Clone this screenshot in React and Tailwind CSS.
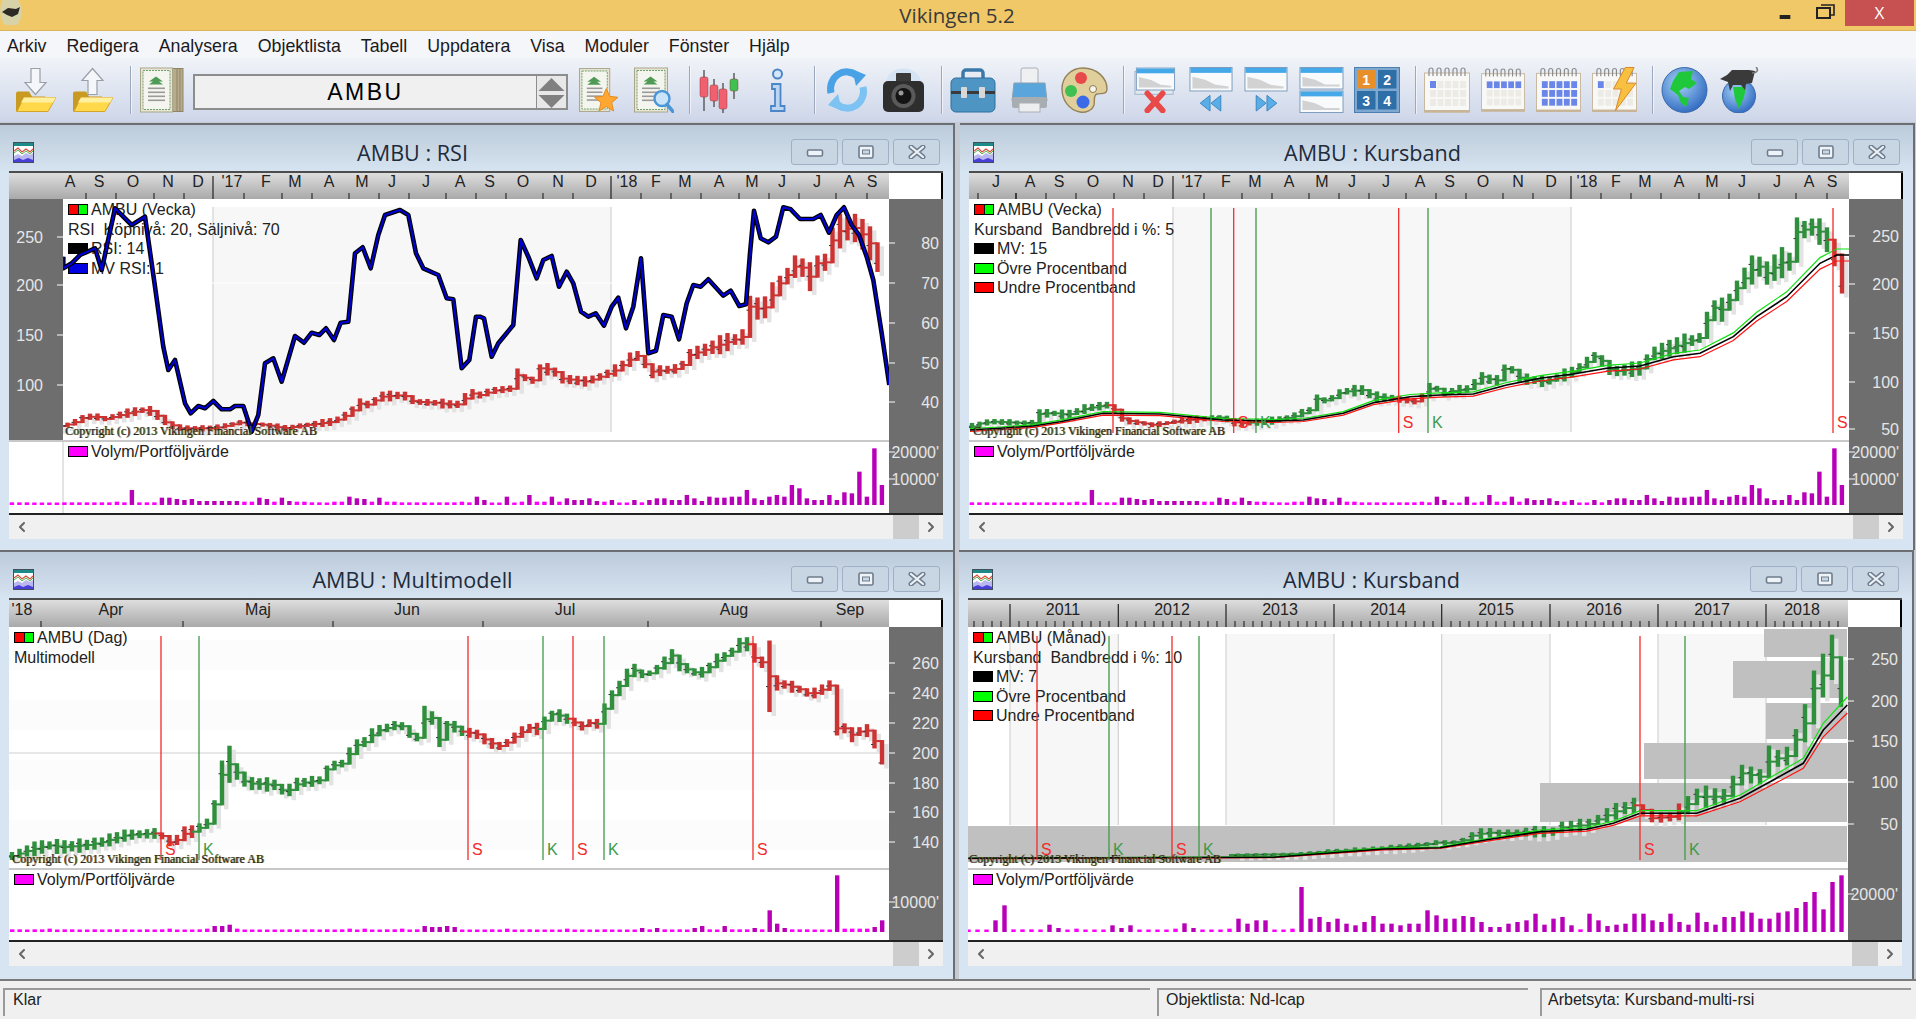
import { ChevronLeft, ChevronRight } from "lucide-react";

const RED = "#cc3333";
const GREEN = "#2f8f3c";

const zp = (ox, oy, arr) => arr.map(([x, y]) => [ox + x / 3, oy + y / 3]);
const rnd = (i) => {
  const v = Math.sin(i * 12.9898) * 43758.5453;
  return v - Math.floor(v);
};
const interp = (path, x) => {
  if (x <= path[0][0]) return path[0][1];
  for (let i = 1; i < path.length; i++) {
    if (x <= path[i][0]) {
      const [x0, y0] = path[i - 1];
      const [x1, y1] = path[i];
      return y0 + ((y1 - y0) * (x - x0)) / (x1 - x0 || 1);
    }
  }
  return path[path.length - 1][1];
};
const pts = (path) => path.map(([x, y]) => `${x.toFixed(1)},${y.toFixed(1)}`).join(" ");
const colorAt = (segs, x) => {
  let c = "g";
  for (const [sx, sc] of segs) if (x >= sx) c = sc;
  return c === "g" ? GREEN : RED;
};

// price paths read off the picture
const weeklyRight = [[0, 825], [40, 812], [100, 805], [110, 765], [170, 785], [180, 745], [220, 750], [240, 775], [320, 785], [400, 755], [470, 705], [515, 755], [600, 745], [630, 705], [790, 650], [810, 560], [850, 570], [875, 530], [900, 490], [945, 440], [965, 440], [990, 470], [1010, 430], [1050, 425], [1060, 340], [1120, 320], [1145, 340], [1170, 370], [1190, 420], [1212, 500]];
const rsiPrice = [...zp(0, 120, [[170, 920], [220, 910], [240, 895], [285, 888], [310, 898], [380, 880], [440, 868], [465, 880], [490, 905], [540, 925], [580, 925], [640, 925], [720, 908], [800, 915], [850, 925], [920, 915], [1000, 905], [1050, 880], [1075, 850], [1100, 855], [1145, 830], [1210, 825], [1240, 845], [1300, 848], [1370, 855], [1415, 820], [1440, 825]]), ...zp(480, 120, weeklyRight)];
const rsiLine = [...zp(0, 120, [[190, 410], [190, 445], [215, 430], [240, 405], [285, 385], [305, 450], [345, 265], [395, 315], [435, 290], [465, 500], [490, 680], [505, 750], [525, 720], [555, 850], [572, 880], [595, 858], [615, 865], [640, 843], [665, 868], [690, 868], [705, 858], [730, 858], [755, 935], [775, 885], [795, 730], [820, 715], [845, 785], [885, 648], [912, 668], [935, 638], [958, 645], [978, 625], [1002, 660], [1022, 608], [1045, 605], [1065, 400], [1088, 382], [1112, 445], [1135, 345], [1155, 285], [1200, 270], [1225, 285], [1248, 400], [1270, 445], [1315, 465], [1340, 535], [1360, 538], [1385, 745], [1408, 720], [1428, 590]]), ...zp(480, 120, [[0, 590], [12, 595], [35, 710], [55, 670], [100, 615], [122, 360], [145, 410], [170, 475], [190, 420], [215, 408], [237, 500], [260, 455], [280, 490], [303, 575], [325, 590], [347, 580], [372, 617], [395, 560], [415, 533], [438, 625], [460, 560], [483, 415], [505, 700], [528, 692], [550, 585], [575, 590], [597, 658], [620, 550], [640, 495], [662, 500], [685, 478], [730, 527], [752, 512], [778, 558], [798, 553], [810, 400], [822, 272], [842, 355], [865, 367], [888, 350], [910, 262], [932, 268], [960, 297], [1000, 297], [1022, 285], [1047, 338], [1070, 285], [1092, 262], [1115, 315], [1137, 345], [1160, 410], [1180, 480], [1205, 640], [1228, 795]])];
const kursPrice = [...zp(960, 120, [[35, 920], [60, 910], [100, 905], [215, 910], [240, 880], [290, 880], [320, 885], [380, 865], [440, 855], [465, 870], [490, 900], [580, 915], [680, 900], [750, 895], [790, 892], [830, 910], [920, 905], [1000, 890], [1050, 870], [1075, 830], [1100, 845], [1145, 815], [1210, 810], [1240, 830], [1300, 835], [1370, 845], [1415, 800], [1440, 810]]), ...zp(1440, 120, weeklyRight)];
const kursMv = [...zp(960, 120, [[30, 930], [120, 925], [220, 918], [300, 905], [430, 880], [600, 882], [790, 900], [940, 903], [1030, 900], [1150, 880], [1240, 848], [1350, 830], [1440, 825]]), ...zp(1440, 120, [[0, 825], [100, 822], [200, 795], [300, 775], [400, 762], [500, 745], [600, 738], [700, 710], [780, 700], [880, 650], [950, 590], [1040, 530], [1140, 430], [1190, 405], [1228, 405]])];
const multiPrice = [...zp(0, 550, [[30, 920], [90, 900], [130, 890], [155, 885], [180, 892], [260, 885], [300, 878], [380, 855], [470, 850], [490, 860], [512, 880], [540, 865], [560, 845], [585, 845], [605, 828], [628, 818], [650, 740], [672, 650], [695, 640], [718, 680], [740, 700], [830, 705], [855, 730], [895, 700], [965, 690], [985, 650], [1030, 640], [1050, 610], [1075, 580], [1100, 575], [1125, 545], [1190, 525], [1212, 530], [1235, 560], [1260, 565], [1280, 480], [1300, 510], [1325, 590], [1348, 495], [1370, 545], [1395, 545], [1415, 550], [1440, 555]]), ...zp(480, 550, [[0, 555], [20, 575], [65, 590], [110, 555], [155, 530], [178, 540], [200, 500], [222, 490], [270, 510], [288, 520], [310, 530], [335, 515], [360, 525], [378, 460], [400, 430], [425, 400], [450, 365], [470, 360], [495, 380], [515, 365], [560, 335], [582, 310], [605, 355], [630, 360], [650, 370], [675, 365], [695, 345], [720, 325], [765, 300], [785, 270], [810, 290], [830, 340], [855, 335], [875, 400], [898, 400], [920, 405], [965, 420], [990, 435], [1035, 415], [1060, 400], [1066, 535], [1100, 535], [1125, 565], [1145, 535], [1168, 545], [1190, 585], [1212, 650]])];
const monthPrice = [...zp(960, 550, [[830, 915], [1020, 912], [1100, 905], [1260, 895], [1350, 888], [1420, 880], [1440, 875]]), ...zp(1440, 550, [[0, 880], [60, 875], [100, 855], [140, 848], [200, 850], [280, 845], [340, 845], [370, 830], [440, 825], [470, 810], [525, 785], [580, 765], [610, 780], [630, 805], [700, 800], [770, 740], [850, 740], [905, 670], [960, 680], [990, 630], [1040, 620], [1095, 520], [1122, 415], [1150, 375], [1177, 320], [1203, 410]])];
const monthMv = [...zp(960, 550, [[25, 925], [940, 922], [1100, 910], [1270, 897], [1440, 893]]), ...zp(1440, 550, [[0, 893], [150, 868], [300, 845], [440, 838], [520, 820], [600, 790], [770, 790], [900, 745], [1000, 690], [1090, 640], [1150, 540], [1222, 465]])];

const weeklyVol = [8, 8, 8, 5, 5, 5, 5, 8, 8, 8, 8, 8, 8, 8, 10, 8, 45, 8, 8, 8, 22, 22, 18, 15, 18, 12, 12, 12, 12, 12, 12, 10, 10, 22, 18, 10, 22, 12, 10, 10, 8, 8, 5, 10, 10, 25, 20, 18, 10, 22, 10, 10, 8, 8, 8, 8, 5, 8, 8, 8, 10, 8, 25, 15, 7, 5, 25, 7, 10, 30, 10, 10, 25, 10, 20, 15, 15, 20, 12, 10, 15, 7, 5, 15, 8, 15, 20, 20, 15, 15, 30, 20, 12, 25, 22, 22, 25, 25, 45, 20, 15, 25, 30, 25, 60, 50, 20, 15, 15, 30, 15, 38, 35, 100, 25, 170, 60];
const dailyVol = [8, 8, 6, 8, 8, 10, 6, 8, 8, 6, 6, 8, 6, 8, 8, 8, 6, 6, 8, 6, 8, 10, 6, 6, 5, 8, 10, 18, 18, 22, 10, 5, 5, 5, 5, 6, 5, 8, 5, 6, 8, 5, 8, 5, 8, 10, 6, 10, 6, 5, 8, 8, 10, 6, 8, 18, 15, 15, 18, 15, 5, 5, 5, 5, 8, 6, 10, 5, 5, 8, 5, 5, 6, 5, 10, 5, 5, 5, 5, 8, 6, 5, 5, 5, 12, 8, 12, 8, 5, 8, 5, 12, 18, 8, 5, 18, 8, 8, 8, 12, 8, 65, 25, 12, 8, 8, 8, 6, 5, 5, 170, 10, 10, 10, 10, 15, 35];
const monthVol = [3, 3, 3, 35, 80, 8, 8, 8, 6, 22, 12, 6, 10, 6, 6, 6, 20, 12, 20, 6, 3, 5, 5, 10, 26, 12, 6, 6, 6, 10, 40, 25, 35, 35, 6, 6, 10, 135, 40, 45, 30, 40, 25, 20, 30, 48, 25, 25, 20, 25, 25, 65, 50, 40, 40, 48, 45, 30, 15, 15, 25, 30, 35, 55, 22, 40, 45, 20, 8, 55, 35, 18, 22, 25, 55, 55, 35, 30, 55, 30, 22, 58, 30, 22, 45, 45, 62, 58, 40, 40, 58, 62, 72, 90, 120, 68, 150, 170];

function PriceBars({ path, from, to, step, segs, hw, seed = 1 }) {
  const bars = [];
  let i = 0;
  let prevY = null;
  for (let x = from; x <= to; x += step) {
    const y = interp(path, x);
    const h = Math.max(1.5, hw(y, x) * (0.55 + 0.7 * rnd(i + seed)));
    const last = prevY === null ? y : prevY;
    bars.push({
      x,
      last,
      top: Math.min(y - h, last - 1),
      bottom: Math.max(y + h, last + 1),
      c: colorAt(segs, x),
      t: y + (rnd(i + 40) - 0.5) * h,
    });
    prevY = y;
    i++;
  }
  return (
    <g>
      {bars.map((b) => (
        <rect key={`s${b.x}`} x={b.x + 2} y={b.top + 4} width="4.5" height={b.bottom - b.top} fill="#e3e3e3" />
      ))}
      {bars.map((b) => (
        <g key={b.x}>
          <rect x={b.x - step} y={b.last - 1} width={step} height="2" fill={b.c} />
          <rect x={b.x - 2.2} y={b.top} width="4.4" height={b.bottom - b.top} fill={b.c} />
          <rect x={b.x - 3.5} y={b.t} width="2" height="1" fill="#333" />
        </g>
      ))}
    </g>
  );
}

function VolBars({ data, from, step, base }) {
  return (
    <g>
      {data.map((v, i) => (
        <rect key={i} x={from + step * i - 2} y={base - Math.max(v / 3, 2.5)} width="4.4" height={Math.max(v / 3, 2.5)} fill={v >= 11 ? "#b800b8" : "#ff00ff"} />
      ))}
    </g>
  );
}

function Signals({ list, y0, y1, labelY }) {
  return (
    <g>
      {list.map(([x, kind, label]) => (
        <g key={x}>
          <line x1={x} x2={x} y1={y0} y2={y1} stroke={kind === "S" ? "#f52a2a" : "#3e9a48"} strokeWidth="1.3" />
          {label && (
            <text x={x + 4} y={labelY} fontSize="16" fill={kind === "S" ? "#f52a2a" : "#3e9a48"}>
              {kind}
            </text>
          )}
        </g>
      ))}
    </g>
  );
}

function Bands({ mv, k, base, w = 1.2, blackW = 1.6 }) {
  const up = mv.map(([x, y]) => [x, y - (base - y) * k]);
  const down = mv.map(([x, y]) => [x, y + (base - y) * k]);
  return (
    <g fill="none">
      <polyline points={pts(down)} stroke="#ff1010" strokeWidth={w} />
      <polyline points={pts(up)} stroke="#10e010" strokeWidth={w} />
      <polyline points={pts(mv)} stroke="#000" strokeWidth={blackW} />
    </g>
  );
}

function BandSpots({ shades, lines, y0, y1 }) {
  return (
    <g>
      {shades.map(([a, b]) => (
        <rect key={a} x={a} y={y0} width={b - a} height={y1 - y0} fill="#f7f7f7" />
      ))}
      {lines.map((x) => (
        <line key={x} x1={x} x2={x} y1={y0} y2={y1} stroke="#d2d2d2" strokeWidth="1.2" />
      ))}
    </g>
  );
}

function Swatch({ kind }) {
  if (kind === "rg") {
    return (
      <span className="flex h-[11px] w-[20px] shrink-0 border border-black">
        <span className="flex-1 bg-[#ff0000] border-r border-black" />
        <span className="flex-1 bg-[#00ff00]" />
      </span>
    );
  }
  const cls = {
    black: "bg-black",
    blue: "bg-[#0000e0]",
    green: "bg-[#00ff00]",
    red: "bg-[#ff0000]",
    pink: "bg-[#ff00ff]",
  }[kind];
  return <span className={`h-[11px] w-[20px] shrink-0 border border-black ${cls}`} />;
}

function Legend({ rows, className }) {
  return (
    <div className={`absolute top-[1px] text-[16px] leading-[19.5px] text-[#222] whitespace-pre ${className}`}>
      {rows.map(([swatch, text]) => (
        <div key={text} className="flex h-[19.5px] items-center gap-[3px]">
          {swatch && <Swatch kind={swatch} />}
          <span>{text}</span>
        </div>
      ))}
    </div>
  );
}

function AxisTicks({ ticks, x, label, anchor = "end" }) {
  return (
    <g>
      {ticks.map(([text, y]) => (
        <g key={text}>
          <line x1={x} x2={x + 6} y1={y} y2={y} stroke="#dcdcdc" strokeWidth="1.3" />
          <text x={label} y={y + 6} textAnchor={anchor} fontSize="16" fill="#e6e6e6">
            {text}
          </text>
        </g>
      ))}
    </g>
  );
}

function WinGlyph({ kind }) {
  if (kind === "min") {
    return (
      <svg width="18" height="12" viewBox="0 0 18 12">
        <rect x="1.5" y="4" width="15" height="6" rx="1.5" fill="#eef3f8" stroke="#6f7c8c" strokeWidth="1.6" />
      </svg>
    );
  }
  if (kind === "max") {
    return (
      <svg width="16" height="14" viewBox="0 0 16 14">
        <rect x="1" y="1" width="14" height="12" rx="1.5" fill="#eef3f8" stroke="#6f7c8c" strokeWidth="1.6" />
        <rect x="4.5" y="5" width="7" height="4" fill="#c9d6e4" stroke="#6f7c8c" />
      </svg>
    );
  }
  return (
    <svg width="18" height="14" viewBox="0 0 18 14">
      <path d="M3 2 L15 12 M15 2 L3 12" stroke="#6f7c8c" strokeWidth="5" strokeLinecap="round" />
      <path d="M3 2 L15 12 M15 2 L3 12" stroke="#eef3f8" strokeWidth="2.2" strokeLinecap="round" />
    </svg>
  );
}

function ChartDocIcon() {
  return (
    <svg width="21" height="21" viewBox="0 0 21 21" className="shrink-0 mt-[3px]">
      <rect x="0.5" y="0.5" width="20" height="20" fill="#fff" stroke="#40505a" />
      <rect x="1" y="1" width="19" height="3" fill="#1d8a8a" />
      <path d="M1 14 L5 12 L9 14 L13 11 L17 13 L20 11 L20 20 L1 20 Z" fill="#b9b6f0" />
      <path d="M1 18 L6 16 L10 18 L15 16 L20 18 L20 20 L1 20 Z" fill="#4a3ed8" />
      <polyline points="1,9 5,6 9,10 13,7 17,10 20,7" fill="none" stroke="#d8503c" strokeWidth="1.2" />
      <polyline points="1,11 5,8 9,12 13,9 17,12 20,9" fill="none" stroke="#52b552" strokeWidth="1" />
    </svg>
  );
}

function ChartWindow({ title, frameLeft, headerTop, headerH, volH, headerLabels, headerTicks, leftAxis, rightTicks, volTicks, plot, overlay, volume, legend, legendClass, copyrightClass, className }) {
  const top = headerTop + headerH;
  const px = frameLeft + (leftAxis ? 54 : 0);
  const pw = 880 - (leftAxis ? 54 : 0);
  return (
    <div className={`flex h-full flex-col border-t-2 border-r-2 border-[#6b6e73] bg-[#d7e4f2] ${className}`}>
      <div className="flex h-[46px] shrink-0 items-start bg-linear-to-b from-[#bccbda] to-[#d6e3f1] pl-[13px] pr-[13px] pt-[14px]">
        <ChartDocIcon />
        <div className="flex-1 text-center font-['Open_Sans',sans-serif] text-[21.6px] leading-[27px] text-[#1e2b3c]">{title}</div>
        <div className="flex gap-[4px]">
          {["min", "max", "close"].map((k) => (
            <div key={k} className="flex h-[26px] w-[47px] items-center justify-center rounded-[3px] border border-[#9fb0c6] bg-[#c8d5e3]">
              <WinGlyph kind={k} />
            </div>
          ))}
        </div>
      </div>
      <div className="ml-[9px] flex h-[344px] w-[934px] shrink-0 flex-col">
        <div className="flex shrink-0 border-t-2 border-[#4c4c4c]" style={{ height: headerH }}>
          <svg width="880" height={headerH - 2} viewBox={`${frameLeft} ${headerTop + 2} 880 ${headerH - 2}`} className="block shrink-0 bg-linear-to-b from-[#dedede] to-[#a9a9a9]">
            {headerTicks.map(([x, tall]) => (
              <line key={x} x1={x} x2={x} y1={tall ? top - 23 : top - 6} y2={top} stroke="#222" strokeWidth={tall ? 1.2 : 1.1} />
            ))}
            {headerLabels.map(([text, x]) => (
              <text key={`${text}${x}`} x={x} y={top - 12} textAnchor="middle" fontSize="16" fill="#222">
                {text}
              </text>
            ))}
          </svg>
          <div className="flex-1 border-r-2 border-black bg-white" />
        </div>
        <div className="flex min-h-0 flex-1 border-b-2 border-[#222]">
          <div className="flex w-[880px] shrink-0 flex-col">
            <div className="flex h-[241px] shrink-0">
              {leftAxis && (
                <div className="w-[54px] shrink-0 bg-[#6e6e6e]">
                  <svg width="54" height="241" viewBox={`${frameLeft} ${top} 54 241`} className="block">
                    <AxisTicks ticks={leftAxis} x={57} label={43} />
                  </svg>
                </div>
              )}
              <div className="relative shrink-0 bg-white" style={{ width: pw }}>
                <svg width={pw} height="241" viewBox={`${px} ${top} ${pw} 241`} className="block">
                  {plot}
                </svg>
                <Legend rows={legend} className={legendClass} />
                <svg width={pw} height="241" viewBox={`${px} ${top} ${pw} 241`} className="absolute inset-0">
                  {overlay}
                </svg>
                <div className={`absolute bottom-[3px] font-['Liberation_Serif',serif] text-[12px] leading-[12px] text-[#222] [text-shadow:1px_0_0_#8a7a20] whitespace-nowrap ${copyrightClass}`}>
                  Copyright (c) 2013 Vikingen Financial Software AB
                </div>
              </div>
            </div>
            <div className="h-[2px] shrink-0 bg-[#c8c8c8]" />
            <div className="relative flex-1 bg-white">
              <svg width="880" height={volH} viewBox={`${frameLeft} ${top + 243} 880 ${volH}`} className="block">
                {leftAxis && <line x1={px} x2={px} y1={top + 243} y2={top + 243 + volH} stroke="#c8c8c8" />}
                {volume}
              </svg>
              <div className={`absolute top-0 text-[16px] leading-[19.5px] text-[#222] ${leftAxis ? "left-[59px]" : "left-[5px]"}`}>
                <div className="flex h-[19.5px] items-center gap-[3px]">
                  <Swatch kind="pink" />
                  <span>Volym/Portföljvärde</span>
                </div>
              </div>
            </div>
          </div>
          <div className="flex-1 bg-[#6e6e6e]">
            <svg width="54" height={241 + 2 + volH} viewBox={`${frameLeft + 880} ${top} 54 ${241 + 2 + volH}`} className="block">
              <AxisTicks ticks={rightTicks} x={frameLeft + 880} label={frameLeft + 930} />
              <AxisTicks ticks={volTicks} x={frameLeft + 880} label={frameLeft + 930} />
            </svg>
          </div>
        </div>
      </div>
      <div className="ml-[9px] flex h-[24px] w-[934px] shrink-0 items-center bg-[#f0f0f0]">
        <ChevronLeft size={16} strokeWidth={3} className="ml-[5px] text-[#666]" />
        <div className="flex-1" />
        <div className="h-[24px] w-[26px] bg-[#cdcdcd]" />
        <ChevronRight size={16} strokeWidth={3} className="mx-[4px] text-[#666]" />
      </div>
    </div>
  );
}

/* toolbar icons */
function FolderIcon({ up, className }) {
  return (
    <svg viewBox="0 0 41 45" className={className}>
      <path d="M14 24 H3 a2 2 0 0 0 -2 2 V44 H30 V29 H17 Z" fill="#c99a22" />
      <path d="M9 30 H41 L33 44 H2 Z" fill="#ffd94a" stroke="#d8a52a" />
      <path d="M9 30 H41 L38 35 H6 Z" fill="#fff0a0" />
      {up ? (
        <path d="M20.5 1 L31 13 H25 V27 H16 V13 H10 Z" fill="#f4f6fa" stroke="#9aa0a8" strokeWidth="1.2" />
      ) : (
        <path d="M16 1 H25 V15 H31 L20.5 27 L10 15 H16 Z" fill="#f4f6fa" stroke="#9aa0a8" strokeWidth="1.2" />
      )}
    </svg>
  );
}

function Certificate({ x = 0, w = 33, h = 45 }) {
  return (
    <g>
      <rect x={x + 0.5} y="0.5" width={w} height={h - 1} fill="#e9e5d4" stroke="#a9a68c" />
      <rect x={x + 3} y="3" width={w - 5} height={h - 6} fill="#f4f5ee" stroke="#6f9f6a" strokeDasharray="2 1" />
      <path d={`M${x + w / 2} 9 l-7 5 h4 l-4 3 h14 l-4 -3 h4 Z`} fill="#4f9a55" />
      {[20, 24, 28, 32].map((y) => (
        <rect key={y} x={x + 8} y={y} width={w - 15} height="1.6" fill="#9a9a9a" />
      ))}
    </g>
  );
}

function CertStack({ className }) {
  return (
    <svg viewBox="0 0 44 45" className={className}>
      {[39, 36, 33].map((x) => (
        <rect key={x} x={x - 8} y="1" width="12" height="43" fill="#b8ab8c" stroke="#8f8468" />
      ))}
      <Certificate w={32} />
    </svg>
  );
}

function CertStar({ className }) {
  return (
    <svg viewBox="0 0 40 45" className={className}>
      <Certificate w={31} />
      <path d="M28 21 L31.5 29 L40 30 L33.5 35.5 L35.5 44 L28 39.5 L20.5 44 L22.5 35.5 L16 30 L24.5 29 Z" fill="#ffa733" stroke="#e88a1a" />
    </svg>
  );
}

function CertFind({ className }) {
  return (
    <svg viewBox="0 0 40 45" className={className}>
      <Certificate w={33} />
      <circle cx="28" cy="31" r="7.5" fill="#c9e4f8" stroke="#4b96d8" strokeWidth="2.4" />
      <path d="M33 37 L39 44" stroke="#4b96d8" strokeWidth="3.5" strokeLinecap="round" />
    </svg>
  );
}

function CandlesIcon({ className }) {
  const c = [[5, 3, 44, 10, 30, "#f0606e"], [15, 12, 40, 18, 34, "#f0606e"], [24, 16, 46, 22, 42, "#f0606e"], [35, 6, 32, 12, 24, "#3fc04f"]];
  return (
    <svg viewBox="0 0 45 46" className={className}>
      {c.map(([x, y0, y1, b0, b1, col]) => (
        <g key={x}>
          <line x1={x} x2={x} y1={y0} y2={y1} stroke="#555" strokeWidth="1.4" />
          <rect x={x - 4} y={b0} width="8" height={b1 - b0} rx="2" fill={col} stroke="#8a3a40" strokeWidth="0.5" />
        </g>
      ))}
    </svg>
  );
}

function InfoIcon({ className }) {
  return (
    <svg viewBox="0 0 19 46" className={className}>
      <circle cx="9.5" cy="7" r="4.5" fill="#d6e6f8" stroke="#4b86c8" strokeWidth="2" />
      <path d="M4 17 H12.5 V39 H16.5 V44 H3 V39 H7 V22 H4 Z" fill="#bcd6f2" stroke="#4b86c8" strokeWidth="1.8" />
    </svg>
  );
}

function RefreshIcon({ className }) {
  return (
    <svg viewBox="0 0 46 46" className={className}>
      <path d="M7 26 A16 17 0 0 1 33 9" fill="none" stroke="#4aa2e6" strokeWidth="7" />
      <path d="M28 2 L42 8 L32 19 Z" fill="#4aa2e6" />
      <path d="M39 20 A16 17 0 0 1 13 37" fill="none" stroke="#7cc2f2" strokeWidth="7" />
      <path d="M18 44 L4 38 L14 27 Z" fill="#7cc2f2" />
    </svg>
  );
}

function CameraIcon({ className }) {
  return (
    <svg viewBox="0 0 43 46" className={className}>
      <path d="M4 16 A17 14 0 0 1 39 16 Z" fill="#d4e4f4" />
      <rect x="14" y="6" width="15" height="9" rx="1" fill="#3a3a3a" />
      <rect x="1" y="14" width="41" height="31" rx="5" fill="#2e2e2e" />
      <circle cx="21.5" cy="29" r="12" fill="#5a5a5a" />
      <circle cx="21.5" cy="29" r="8" fill="#141414" />
      <circle cx="19" cy="26" r="2.5" fill="#9a9a9a" />
    </svg>
  );
}

function BriefcaseIcon({ className }) {
  return (
    <svg viewBox="0 0 46 46" className={className}>
      <path d="M13 12 V6 a3 3 0 0 1 3 -3 H30 a3 3 0 0 1 3 3 V12" fill="none" stroke="#3b7aa8" strokeWidth="3.5" />
      <rect x="1" y="11" width="44" height="34" rx="5" fill="#4f95c4" stroke="#2f6f9f" />
      <rect x="1" y="24" width="44" height="3" fill="#3a3a3a" />
      <rect x="11" y="20" width="6" height="11" rx="1" fill="#d8d8d8" />
      <rect x="29" y="20" width="6" height="11" rx="1" fill="#d8d8d8" />
    </svg>
  );
}

function PrinterIcon({ className }) {
  return (
    <svg viewBox="0 0 37 46" className={className}>
      <rect x="10" y="1" width="17" height="17" rx="2" fill="#eef0f2" stroke="#aab0b6" />
      <path d="M3 16 H34 L36 34 H1 Z" fill="#5aa6dc" stroke="#8aa0b0" />
      <rect x="1" y="30" width="35" height="11" rx="2" fill="#a8adb2" />
      <rect x="8" y="36" width="21" height="9" fill="#eceef0" stroke="#aab0b6" />
    </svg>
  );
}

function PaletteIcon({ className }) {
  return (
    <svg viewBox="0 0 47 46" className={className}>
      <path d="M22 1 C36 1 46 11 46 22 C46 28 40 26 36 27 C32 28 34 34 33 38 C31 44 24 46 19 45 C8 43 1 33 1 22 C1 10 10 1 22 1 Z" fill="#e0cf9a" stroke="#94825a" strokeWidth="1.4" />
      <circle cx="20" cy="11" r="6" fill="#e84a4a" />
      <circle cx="10" cy="24" r="6" fill="#3fc050" />
      <circle cx="22" cy="35" r="6.5" fill="#3a6ae8" />
      <circle cx="32" cy="22" r="3.5" fill="#f7f5ee" stroke="#8a7a50" />
    </svg>
  );
}

function MiniWin({ x = 0, y = 0, w = 43, h = 24 }) {
  return (
    <g>
      <rect x={x + 0.5} y={y + 0.5} width={w} height={h} fill="#f8fafc" stroke="#7d9cbc" />
      <rect x={x + 1} y={y + 1} width={w - 1} height="5" fill="#45a8e8" />
      <path d={`M${x + 3} ${y + h - 2} V${y + 10} L${x + 16} ${y + 13} L${x + 26} ${y + 18} L${x + w - 3} ${y + h - 4} V${y + h - 2} Z`} fill="#d2d2d2" />
    </g>
  );
}

function WinCloseIcon({ className }) {
  return (
    <svg viewBox="0 0 44 47" className={className}>
      <rect x="1" y="4" width="40" height="24" fill="#dfe7f0" stroke="#a0b4c8" />
      <MiniWin x={2} y={0} w={40} h={23} />
      <path d="M14 27 L30 45 M30 27 L14 45" stroke="#e84a4a" strokeWidth="6" strokeLinecap="round" />
    </svg>
  );
}

function WinArrowIcon({ back, className }) {
  return (
    <svg viewBox="0 0 44 47" className={className}>
      <MiniWin w={43} />
      <g fill="#5aaee8" stroke="#3a86c0">
        {back ? (
          <>
            <path d="M21 29 V45 L11 37 Z" />
            <path d="M32 29 V45 L22 37 Z" />
          </>
        ) : (
          <>
            <path d="M12 29 V45 L22 37 Z" />
            <path d="M23 29 V45 L33 37 Z" />
          </>
        )}
      </g>
    </svg>
  );
}

function WinSplitIcon({ className }) {
  return (
    <svg viewBox="0 0 45 47" className={className}>
      <MiniWin w={44} h={22} />
      <MiniWin y={24} w={44} h={22} />
    </svg>
  );
}

function GridIcon({ className }) {
  const cells = [[3, 3, "1", "#e88f2a"], [24, 3, "2", "#2f6fa8"], [3, 24, "3", "#2f6fa8"], [24, 24, "4", "#2f6fa8"]];
  return (
    <svg viewBox="0 0 46 46" className={className}>
      <rect x="0.5" y="0.5" width="45" height="45" fill="#7fa8d0" stroke="#4d7fb0" />
      {cells.map(([x, y, n, c]) => (
        <g key={n}>
          <rect x={x} y={y} width="18.5" height="18.5" fill={c} />
          <text x={x + 9.2} y={y + 15} textAnchor="middle" fontSize="14" fontWeight="700" fill="#fff">
            {n}
          </text>
        </g>
      ))}
    </svg>
  );
}

function CalendarIcon({ cells, bolt, className }) {
  return (
    <svg viewBox="0 0 46 46" className={className}>
      <rect x="0.5" y="6" width="45" height="39" fill="#f8f8f6" stroke="#c8b8a0" />
      <rect x="0.5" y="43" width="45" height="2.5" fill="#c8b496" />
      {[5, 13, 21, 29, 37].map((x) => (
        <path key={x} d={`M${x} 9 V3 a2 2 0 0 1 4 0 V9`} fill="none" stroke="#8a8a8a" strokeWidth="1.2" />
      ))}
      {[0, 1, 2].map((r) =>
        [0, 1, 2, 3, 4].map((c) => (
          <rect key={`${r}${c}`} x={6 + c * 7.5} y={14 + r * 9} width="6" height="7" fill={cells(r, c) ? "#6a86e8" : "#ecebe6"} />
        ))
      )}
      {bolt && <path d="M34 0 L22 22 H30 L24 44 L45 16 H35 L43 0 Z" fill="#f8c040" stroke="#d8862a" />}
    </svg>
  );
}

function GlobeIcon({ className }) {
  return (
    <svg viewBox="0 0 47 46" className={className}>
      <defs>
        <radialGradient id="globeFill" cx="0.4" cy="0.35" r="0.7">
          <stop offset="0" stopColor="#a6d2f6" />
          <stop offset="1" stopColor="#2e68c0" />
        </radialGradient>
      </defs>
      <ellipse cx="23.5" cy="23" rx="22.5" ry="22.5" fill="url(#globeFill)" stroke="#3a68a8" />
      <path d="M18 5 L32 4 L30 12 L36 16 L28 22 L24 20 L18 24 L22 30 L28 31 L25 40 L20 36 L17 28 L9 22 L12 14 Z" fill="#1fc83a" />
    </svg>
  );
}

function BullGlobeIcon({ className }) {
  return (
    <svg viewBox="0 0 43 46" className={className}>
      <ellipse cx="21" cy="29" rx="16.5" ry="17" fill="url(#globeFill)" stroke="#3a68a8" />
      <path d="M15 20 L28 20 L26 30 L21 42 L17 32 Z" fill="#1fc83a" />
      <path d="M2 12 L9 8 L14 3 L31 3 L37 4 L34 16 L28 17 L27 23 L23 18 L15 18 L12 24 L10 15 Z" fill="#3a3a3a" />
      <path d="M34 6 C39 6 41 3 38 0" fill="none" stroke="#7a7a7a" strokeWidth="1.5" />
    </svg>
  );
}

function Sep({ className }) {
  return <div className={`h-[48px] w-[2px] shrink-0 border-l border-[#9ea8bc] bg-white/60 ${className}`} />;
}

const ic = "h-[46px] shrink-0";

function Toolbar() {
  return (
    <div className="flex h-[64px] shrink-0 items-center bg-linear-to-b from-[#f0f3f8] to-[#cdd6e9]">
      <FolderIcon className={`${ic} ml-[15px] w-[41px]`} />
      <FolderIcon up className={`${ic} ml-[16px] w-[41px]`} />
      <Sep className="ml-[17px]" />
      <CertStack className={`${ic} ml-[8px] w-[44px]`} />
      <div className="ml-[9px] mt-[4px] flex h-[36px] w-[375px] shrink-0 border-2 border-[#8d8d8d] bg-[#f0f0f0]">
        <div className="flex-1 text-center text-[23px] leading-[32px] tracking-[2.5px] text-black">AMBU</div>
        <div className="flex w-[30px] flex-col justify-center gap-[3px] border-l border-[#8d8d8d] bg-[#e8e8e8]">
          <svg viewBox="0 0 28 14" className="block h-[14px] w-full">
            <path d="M14 1 L27 14 H1 Z" fill="#808080" />
          </svg>
          <svg viewBox="0 0 28 14" className="block h-[14px] w-full">
            <path d="M14 14 L27 1 H1 Z" fill="#808080" />
          </svg>
        </div>
      </div>
      <CertStar className={`${ic} ml-[11px] w-[39px]`} />
      <CertFind className={`${ic} ml-[16px] w-[40px]`} />
      <Sep className="ml-[15px]" />
      <CandlesIcon className={`${ic} ml-[8px] w-[45px]`} />
      <InfoIcon className={`${ic} ml-[24px] w-[19px]`} />
      <Sep className="ml-[27px]" />
      <RefreshIcon className={`${ic} ml-[8px] w-[46px]`} />
      <CameraIcon className={`${ic} ml-[12px] w-[43px]`} />
      <Sep className="ml-[16px]" />
      <BriefcaseIcon className={`${ic} ml-[7px] w-[46px]`} />
      <PrinterIcon className={`${ic} ml-[15px] w-[37px]`} />
      <PaletteIcon className={`${ic} ml-[13px] w-[47px]`} />
      <Sep className="ml-[15px]" />
      <WinCloseIcon className={`${ic} ml-[9px] w-[42px]`} />
      <WinArrowIcon back className={`${ic} ml-[13px] w-[44px]`} />
      <WinArrowIcon className={`${ic} ml-[11px] w-[44px]`} />
      <WinSplitIcon className={`${ic} ml-[11px] w-[45px]`} />
      <GridIcon className={`${ic} ml-[10px] w-[46px]`} />
      <Sep className="ml-[15px]" />
      <CalendarIcon cells={(r, c) => c === 0 && r === 0} className={`${ic} ml-[7px] w-[46px]`} />
      <CalendarIcon cells={(r) => r === 0} className={`${ic} ml-[11px] w-[44px]`} />
      <CalendarIcon cells={() => true} className={`${ic} ml-[11px] w-[45px]`} />
      <CalendarIcon cells={(r, c) => c === 0 && r === 0} bolt className={`${ic} ml-[11px] w-[45px]`} />
      <Sep className="ml-[15px]" />
      <GlobeIcon className={`${ic} ml-[7px] w-[47px]`} />
      <BullGlobeIcon className={`${ic} ml-[10px] w-[43px]`} />
    </div>
  );
}

const menu = ["Arkiv", "Redigera", "Analysera", "Objektlista", "Tabell", "Uppdatera", "Visa", "Moduler", "Fönster", "Hjälp"];

const weekHeader = (x0) =>
  [["A", 70], ["S", 99], ["O", 133], ["N", 168], ["D", 198], ["'17", 232], ["F", 266], ["M", 295], ["A", 329], ["M", 362], ["J", 392], ["J", 426], ["A", 460], ["S", 489.5], ["O", 523], ["N", 558], ["D", 591], ["'18", 627], ["F", 656], ["M", 685], ["A", 719], ["M", 752], ["J", 782], ["J", 817], ["A", 849], ["S", 872]].map(([t, x]) => [t, x + x0]);
const weekTicks = (x0) =>
  [56, 86, 116, 154, 184, 244, 282, 312, 349, 379, 409, 446, 476, 506, 543, 573, 641, 671, 701, 739, 769, 799, 836, 867].map((x) => [x + x0, false]).concat([[213 + x0, true], [611 + x0, true]]);

const monthTall = [1010, 1118.3, 1226, 1334, 1441.7, 1550, 1658, 1766];
const monthTicks = [];
for (let x = 974; x <= 1839; x += 9) {
  if (!monthTall.some((t) => Math.abs(t - x) < 3)) monthTicks.push([x, false]);
}
monthTall.forEach((x) => monthTicks.push([x, true]));

const kursSegs = [[1113, "r"], [1211, "g"], [1233.7, "r"], [1256, "g"], [1398.7, "r"], [1428, "g"], [1833, "r"]];
const multiSegs = [[161, "r"], [199, "g"], [468, "r"], [543, "g"], [573, "r"], [604, "g"], [753, "r"]];
const monthSegs = [[1640, "r"], [1685, "g"]];

const kursLegend = (pct, mv) => [
  ["rg", mv === 15 ? "AMBU (Vecka)" : "AMBU (Månad)"],
  [null, `Kursband  Bandbredd i %: ${pct}`],
  ["black", `MV: ${mv}`],
  ["green", "Övre Procentband"],
  ["red", "Undre Procentband"],
];

const monthBlocks = [[968, 826, 1847, 862], [1540, 783, 1847, 822], [1644, 743, 1847, 779], [1766, 703, 1847, 739], [1733, 661, 1847, 698], [1764, 629, 1847, 657]];

export default function App() {
  return (
    <div className="flex h-[1019px] w-[1916px] flex-col overflow-hidden bg-[#c6cad3] font-['Liberation_Sans',sans-serif]">
      <div className="relative flex h-[31px] shrink-0 items-center justify-center border-b border-[#d9b45a] bg-[#f0c868] font-['Open_Sans',sans-serif] text-[20.5px] text-[#3a3a3a]">
        <svg viewBox="0 0 23 25" className="absolute left-0 top-0 h-[25px] w-[23px]">
          <path d="M3 0 H18 C23 6 23 18 17 25 H5 C-1 18 -1 6 3 0 Z" fill="#d8d2a8" />
          <path d="M2 12 L8 8 L16 9 L20 7 L18 14 L12 17 L7 15 Z" fill="#2c2a24" />
        </svg>
        <span className="-ml-[2px]">Vikingen 5.2</span>
        <div className="absolute right-0 top-0 flex h-[26px] items-start">
          <svg viewBox="0 0 16 6" className="mr-[23px] mt-[15px] h-[4px] w-[16px]">
            <rect width="16" height="6" fill="#222" />
          </svg>
          <svg viewBox="0 0 19 15" className="mr-[10px] mt-[4px] h-[15px] w-[19px]">
            <path d="M5 1 H18 V11 H15" fill="none" stroke="#222" strokeWidth="1.6" />
            <rect x="1" y="4" width="13" height="10" fill="none" stroke="#222" strokeWidth="2" />
          </svg>
          <div className="mr-[2px] flex h-[26px] w-[69px] items-center justify-center bg-[#c75050] text-[17px] text-white">X</div>
        </div>
      </div>
      <div className="flex h-[27px] shrink-0 items-center gap-[20px] bg-[#f5f6fa] pl-[7px] pt-[3px] text-[17.8px] text-[#1a1a1a]">
        {menu.map((m) => (
          <span key={m}>{m}</span>
        ))}
      </div>
      <Toolbar />
      <div className="flex h-[1px] shrink-0 bg-[#c6cad3]" />
      <div className="flex h-[427px] shrink-0">
        <ChartWindow
          className="w-[955px] shrink-0"
          title="AMBU : RSI"
          frameLeft={9}
          headerTop={171}
          headerH={28}
          volH={71}
          headerLabels={weekHeader(0).filter(([, x]) => x > 60)}
          headerTicks={weekTicks(0).filter(([x]) => x > 60)}
          leftAxis={[["250", 237], ["200", 285], ["150", 335], ["100", 385]]}
          rightTicks={[["80", 243], ["70", 283], ["60", 323], ["50", 363], ["40", 402]]}
          volTicks={[["20000'", 452], ["10000'", 479]]}
          legend={[["rg", "AMBU (Vecka)"], [null, "RSI  Köpnivå: 20, Säljnivå: 70"], ["black", "RSI: 14"], ["blue", "MV RSI: 1"]]}
          legendClass="left-[5px]"
          copyrightClass="left-[2px]"
          plot={
            <g>
              <BandSpots shades={[[213, 611]]} lines={[213, 611]} y0={207} y1={432} />
              <line x1="63" x2="889" y1="283" y2="283" stroke="#fff" />
              <PriceBars path={rsiPrice} from={60} to={884} step={7.5} segs={[[0, "r"]]} hw={(y) => (477 - y) * 0.06} />
            </g>
          }
          overlay={
            <g fill="none">
              <polyline points={pts(rsiLine)} stroke="#000" strokeWidth="4.6" strokeLinejoin="round" />
              <polyline points={pts(rsiLine)} stroke="#0000d8" strokeWidth="2" strokeLinejoin="round" />
            </g>
          }
          volume={<VolBars data={weeklyVol} from={11.7} step={7.5} base={505} />}
        />
        <div className="w-[5px] shrink-0" />
        <ChartWindow
          className="w-[955px] shrink-0"
          title="AMBU : Kursband"
          frameLeft={969}
          headerTop={171}
          headerH={28}
          volH={71}
          headerLabels={[["J", 996], ...weekHeader(960)]}
          headerTicks={[[978, false], [1016, false], ...weekTicks(960)]}
          rightTicks={[["250", 236], ["200", 284], ["150", 333], ["100", 382], ["50", 429]]}
          volTicks={[["20000'", 452], ["10000'", 479]]}
          legend={kursLegend(5, 15)}
          legendClass="left-[5px]"
          copyrightClass="left-[4px]"
          plot={
            <g>
              <BandSpots shades={[[1173, 1571]]} lines={[1173, 1571]} y0={207} y1={432} />
              <PriceBars path={kursPrice} from={972} to={1844} step={7.5} segs={kursSegs} hw={(y) => (477 - y) * 0.06} />
              <Bands mv={kursMv} k={0.027} base={477} />
            </g>
          }
          overlay={<Signals list={[[1113, "S"], [1211, "K"], [1233.7, "S", 1], [1256, "K", 1], [1398.7, "S", 1], [1428, "K", 1], [1833, "S", 1]]} y0={208} y1={433} labelY={428} />}
          volume={<VolBars data={weeklyVol} from={971.7} step={7.5} base={505} />}
        />
      </div>
      <div className="flex h-[429px] shrink-0">
        <ChartWindow
          className="w-[955px] shrink-0"
          title="AMBU : Multimodell"
          frameLeft={9}
          headerTop={598}
          headerH={29}
          volH={70}
          headerLabels={[["'18", 22], ["Apr", 111], ["Maj", 258], ["Jun", 407], ["Jul", 565], ["Aug", 734], ["Sep", 850]]}
          headerTicks={[[41], [183], [333], [483], [648], [821]].map(([x]) => [x, false])}
          rightTicks={[["260", 663], ["240", 693], ["220", 723], ["200", 753], ["180", 783], ["160", 812], ["140", 842]]}
          volTicks={[["10000'", 902]]}
          legend={[["rg", "AMBU (Dag)"], [null, "Multimodell"]]}
          legendClass="left-[5px]"
          copyrightClass="left-[3px]"
          plot={
            <g>
              <rect x="9" y="640" width="880" height="30" fill="#fcfcfc" />
              <rect x="9" y="700" width="880" height="30" fill="#fcfcfc" />
              <rect x="9" y="760" width="880" height="30" fill="#fcfcfc" />
              <rect x="9" y="820" width="880" height="30" fill="#fcfcfc" />
              <line x1="9" x2="889" y1="753" y2="753" stroke="#cfcfcf" strokeWidth="1.2" />
              <PriceBars path={multiPrice} from={12} to={884} step={7.5} segs={multiSegs} seed={7} hw={(y, x) => (x > 767 && x < 776 ? 34 : x > 645 && x < 660 ? 3 : x > 215 && x < 235 ? 15 : x > 420 && x < 445 ? 12 : 6)} />
            </g>
          }
          overlay={<Signals list={[[161, "S", 1], [199, "K", 1], [468, "S", 1], [543, "K", 1], [573, "S", 1], [604, "K", 1], [753, "S", 1]]} y0={636} y1={860} labelY={855} />}
          volume={<VolBars data={dailyVol} from={12} step={7.5} base={932} />}
        />
        <div className="w-[4px] shrink-0" />
        <ChartWindow
          className="w-[955px] shrink-0"
          title="AMBU : Kursband"
          frameLeft={968}
          headerTop={598}
          headerH={29}
          volH={70}
          headerLabels={[["2011", 1063], ["2012", 1172], ["2013", 1280], ["2014", 1388], ["2015", 1496], ["2016", 1604], ["2017", 1712], ["2018", 1802]]}
          headerTicks={monthTicks}
          rightTicks={[["250", 659], ["200", 701], ["150", 741], ["100", 782], ["50", 824]]}
          volTicks={[["20000'", 894]]}
          legend={kursLegend(10, 7)}
          legendClass="left-[5px]"
          copyrightClass="left-[1px]"
          plot={
            <g>
              <BandSpots shades={[[1010, 1118], [1226, 1334], [1442, 1550], [1658, 1766]]} lines={monthTall} y0={634} y1={825} />
              {monthBlocks.map(([x0, y0, x1, y1]) => (
                <rect key={y0} x={x0} y={y0} width={x1 - x0} height={y1 - y0} fill="#c0c0c0" />
              ))}
              <PriceBars path={monthPrice} from={1238} to={1841} step={9} segs={monthSegs} seed={3} hw={(y) => (865 - y) * 0.14} />
              <Bands mv={monthMv} k={0.05} base={865} />
            </g>
          }
          overlay={<Signals list={[[1037, "S", 1], [1109, "K", 1], [1172, "S", 1], [1199, "K", 1], [1640, "S", 1], [1685, "K", 1]]} y0={636} y1={860} labelY={855} />}
          volume={<VolBars data={monthVol} from={968.3} step={9} base={932} />}
        />
      </div>
      <div className="flex flex-1 gap-[6px] border-t-2 border-[#7a7a7a] bg-[#f0f0f0] px-[3px] pt-[7px] text-[16px] text-[#222]">
        <div className="h-[28px] w-[1147px] border-l-2 border-t-2 border-[#9a9a9a] pl-[8px] leading-[20px]">Klar</div>
        <div className="ml-[1px] h-[28px] w-[371px] border-l-2 border-t-2 border-[#9a9a9a] pl-[7px] leading-[20px]">Objektlista: Nd-lcap</div>
        <div className="ml-[6px] h-[28px] w-[371px] border-l-2 border-t-2 border-[#9a9a9a] pl-[6px] leading-[20px]">Arbetsyta: Kursband-multi-rsi</div>
      </div>
    </div>
  );
}
